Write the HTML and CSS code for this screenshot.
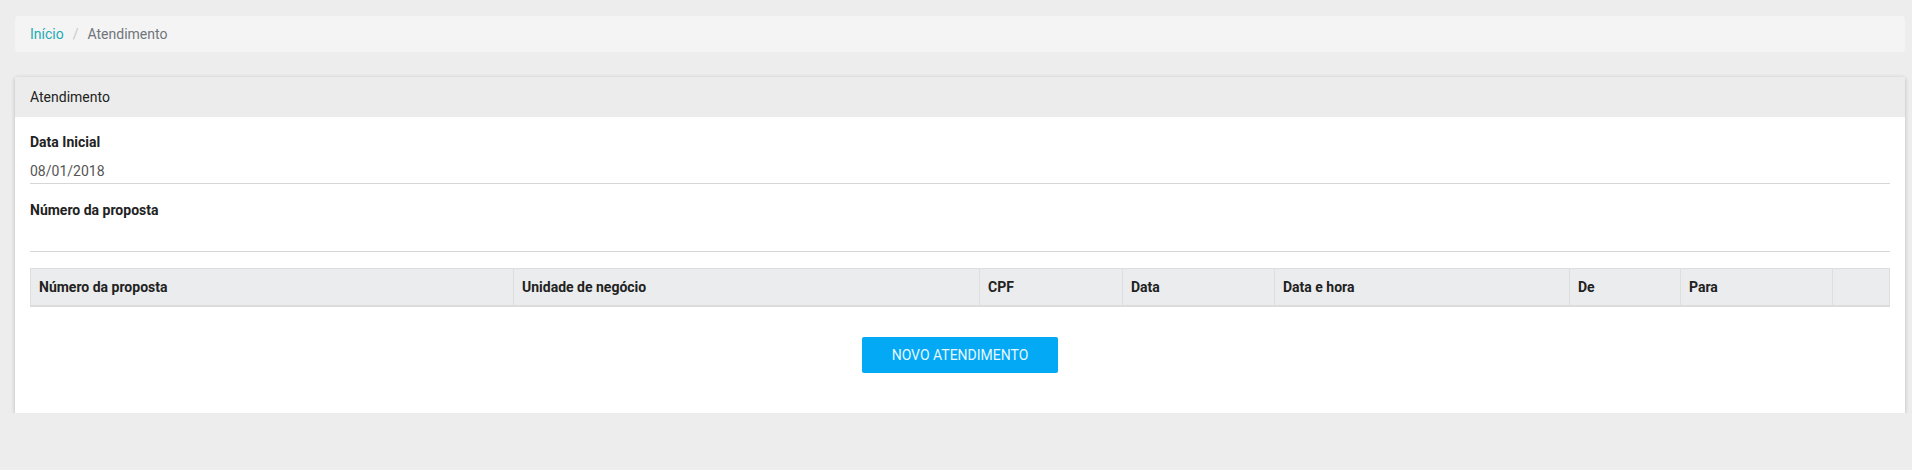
FILE: index.html
```html
<!DOCTYPE html>
<html lang="pt-BR">
<head>
<meta charset="utf-8">
<title>Atendimento</title>
<link rel="stylesheet" href="styles.css">
</head>
<body>
<div class="page">
  <nav class="breadcrumb">
    <a class="crumb-link" href="#">Início</a>
    <span class="crumb-sep">/</span>
    <span class="crumb-current">Atendimento</span>
  </nav>

  <section class="card">
    <header class="card-header">Atendimento</header>
    <div class="card-body">
      <div class="form-group">
        <label class="form-label">Data Inicial</label>
        <div class="form-input">08/01/2018</div>
      </div>
      <div class="form-group">
        <label class="form-label">Número da proposta</label>
        <div class="form-input"></div>
      </div>

      <table class="data-table">
        <colgroup>
          <col class="c1"><col class="c2"><col class="c3"><col class="c4">
          <col class="c5"><col class="c6"><col class="c7"><col class="c8">
        </colgroup>
        <thead>
          <tr>
            <th>Número da proposta</th>
            <th>Unidade de negócio</th>
            <th>CPF</th>
            <th>Data</th>
            <th>Data e hora</th>
            <th>De</th>
            <th>Para</th>
            <th></th>
          </tr>
        </thead>
      </table>

      <div class="actions">
        <button class="btn-primary" type="button">Novo Atendimento</button>
      </div>
    </div>
  </section>
</div>
</body>
</html>
```

FILE: styles.css
```css
* { box-sizing: border-box; }

html, body {
  margin: 0;
  padding: 0;
  background: #ededed;
  font-family: Roboto, "Liberation Sans", Arial, sans-serif;
  font-size: 14px;
  line-height: 20px;
  color: #333;
}

.page {
  padding: 16px 7px 0 15px;
}

.breadcrumb {
  display: flex;
  align-items: center;
  height: 36px;
  padding: 0 15px;
  background: #f4f4f4;
  border-radius: 4px;
}

.crumb-link {
  color: #1eaab5;
  text-decoration: none;
}

.crumb-sep {
  color: #c8c8c8;
  padding: 0 9px;
}

.crumb-current {
  color: #6f757b;
}

.card {
  margin-top: 25px;
  background: #fff;
  box-shadow: 0 1px 4px rgba(0, 0, 0, 0.22);
  border-radius: 1px;
}

.card-header {
  height: 40px;
  display: flex;
  align-items: center;
  padding: 0 15px;
  background: #ececec;
  color: #222;
}

.card-body {
  padding: 15px 15px 40px;
}

.form-group + .form-group {
  margin-top: 16px;
}

.form-label {
  display: block;
  font-weight: 700;
  color: #222;
  height: 20px;
}

.form-input {
  height: 32px;
  padding: 9px 0 2px;
  border-bottom: 1px solid #d6d6d6;
  color: #555;
}

.data-table {
  margin-top: 16px;
  width: 100%;
  border-collapse: collapse;
  table-layout: fixed;
}

.data-table .c1 { width: 483px; }
.data-table .c2 { width: 466px; }
.data-table .c3 { width: 143px; }
.data-table .c4 { width: 152px; }
.data-table .c5 { width: 295px; }
.data-table .c6 { width: 111px; }
.data-table .c7 { width: 152px; }
.data-table .c8 { width: auto; }

.data-table th {
  background: #ebeced;
  border: 1px solid #dedede;
  border-bottom: 2px solid #dcdcdc;
  padding: 7px 8px;
  text-align: left;
  font-weight: 700;
  color: #222;
  height: 37px;
}

.actions {
  display: flex;
  justify-content: center;
  margin-top: 30px;
}

.btn-primary {
  width: 196px;
  height: 36px;
  border: none;
  border-radius: 2px;
  background: #03a9f4;
  color: #e8f7ff;
  font-family: Roboto, "Liberation Sans", Arial, sans-serif;
  font-size: 14px;
  text-transform: uppercase;
  cursor: pointer;
}
```
